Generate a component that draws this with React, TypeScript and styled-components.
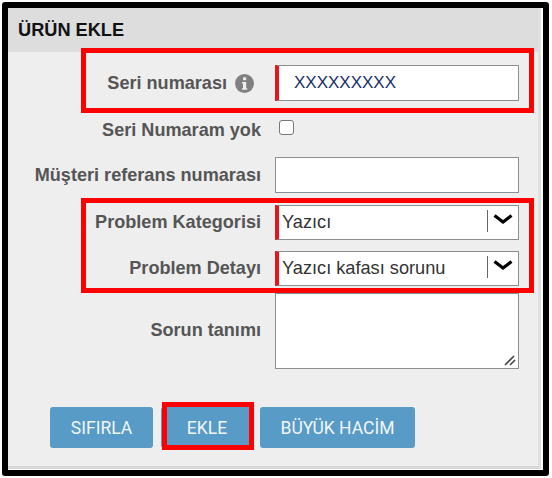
import React from 'react';
import styled, { createGlobalStyle } from 'styled-components';

const GlobalStyle = createGlobalStyle`
  html, body {
    margin: 0;
    padding: 0;
    background: #fff;
  }
  body {
    font-family: 'Liberation Sans', Arial, sans-serif;
  }
`;

const Frame = styled.div`
  box-sizing: border-box;
  width: 547px;
  height: 474px;
  margin: 2px 0 0 2px;
  border: 6px solid #000;
  border-radius: 3px;
  background: #fff;
`;

const Panel = styled.div`
  box-sizing: border-box;
  width: 533px;
  height: 461px;
  background: #eeeeee;
  border-right: 3px solid #e0e0e0;
  border-bottom: 3px solid #d8d8d8;
`;

const Header = styled.div`
  height: 44px;
  padding-left: 10px;
  background: #dddddd;
  display: flex;
  align-items: center;
  font-size: 18.2px;
  font-weight: bold;
  color: #111;
`;

const Form = styled.div`
  display: flex;
  flex-direction: column;
  padding-top: 13px;
`;

const Row = styled.div<{ $height: number; $gap?: number; $top?: boolean }>`
  display: grid;
  grid-template-columns: 253px 244px;
  column-gap: 14px;
  height: ${({ $height }) => $height}px;
  margin-bottom: ${({ $gap }) => $gap ?? 0}px;
  align-items: ${({ $top }) => ($top ? 'start' : 'center')};
`;

const Label = styled.label<{ $offset?: number }>`
  display: flex;
  justify-content: flex-end;
  align-items: center;
  gap: 8px;
  font-size: 18.1px;
  font-weight: bold;
  color: #555;
  white-space: nowrap;
  padding-top: ${({ $offset }) => $offset ?? 0}px;
`;

const InfoBadge = styled.svg`
  width: 19px;
  height: 19px;
  margin-right: 7px;
`;

const TextInput = styled.div<{ $marked?: boolean; $indent?: number }>`
  box-sizing: border-box;
  height: 100%;
  background: #fff;
  border: 1px solid #8a8f94;
  border-left: ${({ $marked }) => ($marked ? '4px solid #e8141c' : '1px solid #8a8f94')};
  padding-left: ${({ $indent }) => $indent ?? 3}px;
  display: flex;
  align-items: center;
  font-size: 17px;
  color: #1a2f6b;
`;

const SelectBox = styled(TextInput)`
  font-size: 18.2px;
  color: #333;
  justify-content: space-between;
`;

const SelectArrow = styled.div`
  box-sizing: border-box;
  height: 22px;
  margin-top: -3px;
  width: 31px;
  border-left: 1px solid #666;
  display: flex;
  justify-content: center;
  padding-top: 4px;
`;

const Chevron = styled.svg`
  width: 20px;
  height: 10px;
`;

const Area = styled(TextInput)`
  position: relative;
  height: 76px;
`;

const Grip = styled.svg`
  position: absolute;
  right: 1px;
  bottom: 1px;
  width: 14px;
  height: 14px;
`;

const CheckBox = styled.div`
  box-sizing: border-box;
  width: 15px;
  height: 15px;
  margin: -5px 0 0 4px;
  background: #fff;
  border: 1.5px solid #777;
  border-radius: 3px;
`;

const Highlight = styled.div`
  position: relative;
  &::after {
    content: '';
    position: absolute;
    inset: var(--inset);
    border: 5px solid #ff0000;
    pointer-events: none;
  }
`;

const FirstHighlight = styled(Highlight)`
  --inset: -17px 4px -12px 73px;
  margin-bottom: 11px;
`;

const SelectHighlight = styled(Highlight)`
  --inset: -7px 4px -7px 73px;
  margin-bottom: 7px;
`;

const Buttons = styled.div`
  display: flex;
  gap: 7px;
  margin: 38px 0 0 42px;
`;

const Action = styled.button<{ $width: number; $marked?: boolean }>`
  position: relative;
  width: ${({ $width }) => $width}px;
  height: 41px;
  border: 0;
  border-radius: 3px;
  background: #579bc6;
  color: #f2f6fa;
  font-family: Roboto, 'Liberation Sans', sans-serif;
  font-size: 17.5px;
  font-weight: 400;
  padding: 0;
  ${({ $marked }) =>
    $marked &&
    `
    margin-left: 1px;
    &::after {
      content: '';
      position: absolute;
      inset: -5px -1px -2px 1px;
      border: 5px solid #ff0000;
    }
  `}
`;

const Arrow: React.FC = () => (
  <SelectArrow>
    <Chevron viewBox="0 0 20 10">
      <path d="M1.5 1.5 L10 8 L18.5 1.5" stroke="#000" strokeWidth="3.2" fill="none" />
    </Chevron>
  </SelectArrow>
);

const App: React.FC = () => (
  <>
    <GlobalStyle />
    <Frame>
      <Panel>
        <Header>ÜRÜN EKLE</Header>
        <Form>
          <FirstHighlight>
            <Row $height={36}>
              <Label>
                Seri numarası
                <InfoBadge viewBox="0 0 19 19">
                  <circle cx="9.5" cy="9.5" r="9.5" fill="#808080" />
                  <rect x="8" y="3.2" width="3.2" height="3" rx="0.8" fill="#eee" />
                  <path d="M7 8 H11.2 V14.2 H12.2 V15.8 H7 V14.2 H8 V9.6 H7 Z" fill="#eee" />
                </InfoBadge>
              </Label>
              <TextInput $marked $indent={15}>XXXXXXXXX</TextInput>
            </Row>
          </FirstHighlight>
          <Row $height={36} $gap={9}>
            <Label>Seri Numaram yok</Label>
            <div>
              <CheckBox />
            </div>
          </Row>
          <Row $height={36} $gap={12}>
            <Label>Müşteri referans numarası</Label>
            <TextInput />
          </Row>
          <SelectHighlight>
            <Row $height={35} $gap={11}>
              <Label>Problem Kategorisi</Label>
              <SelectBox $marked>
                Yazıcı
                <Arrow />
              </SelectBox>
            </Row>
            <Row $height={35}>
              <Label>Problem Detayı</Label>
              <SelectBox $marked>
                Yazıcı kafası sorunu
                <Arrow />
              </SelectBox>
            </Row>
          </SelectHighlight>
          <Row $height={76} $top>
            <Label $offset={27}>Sorun tanımı</Label>
            <Area>
              <Grip viewBox="0 0 14 14">
                <path d="M2 12 L11 3 M7 12 L12 7" stroke="#444" strokeWidth="1.6" fill="none" />
              </Grip>
            </Area>
          </Row>
          <Buttons>
            <Action $width={103}>SIFIRLA</Action>
            <Action $width={92} $marked>EKLE</Action>
            <Action $width={155}>BÜYÜK HACİM</Action>
          </Buttons>
        </Form>
      </Panel>
    </Frame>
  </>
);

export default App;
